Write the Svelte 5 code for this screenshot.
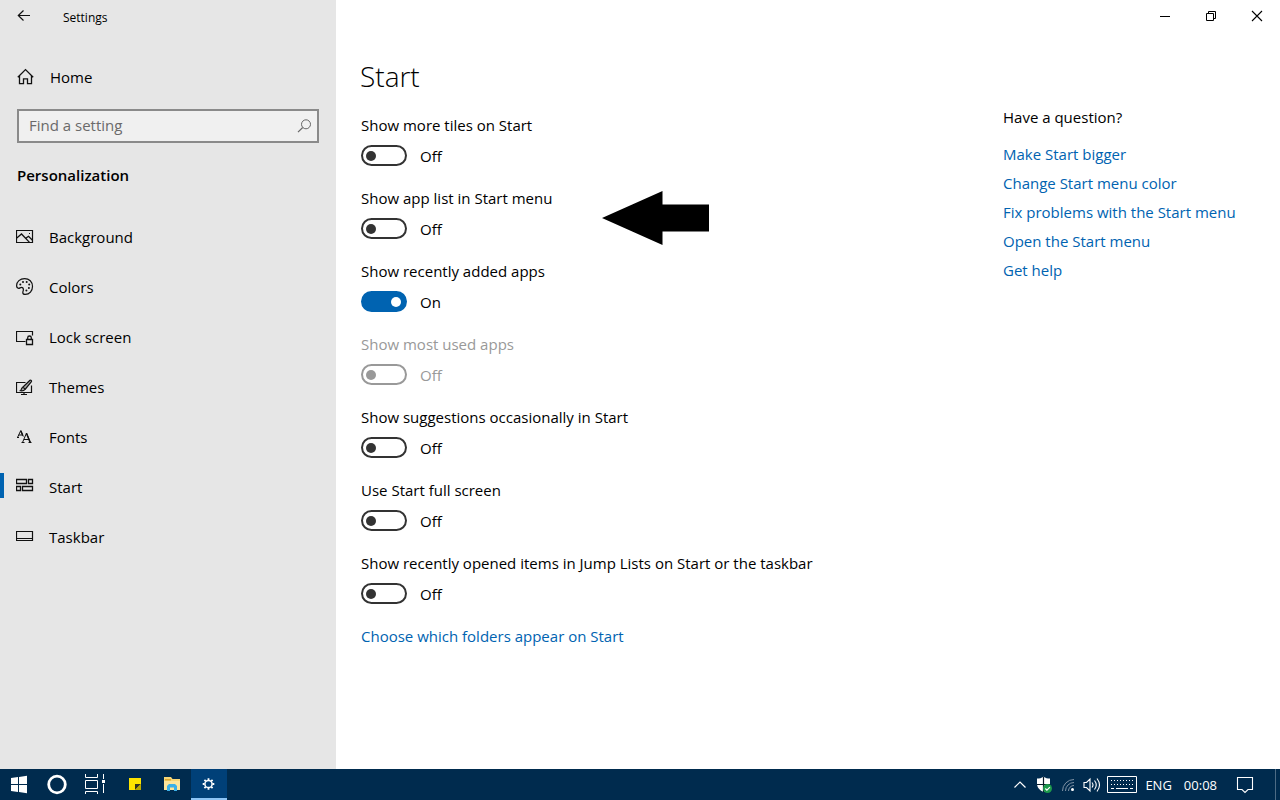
<script>
  const nav = [
    { id: 'background', label: 'Background' },
    { id: 'colors', label: 'Colors' },
    { id: 'lock', label: 'Lock screen' },
    { id: 'themes', label: 'Themes' },
    { id: 'fonts', label: 'Fonts' },
    { id: 'start', label: 'Start' },
    { id: 'taskbar', label: 'Taskbar' }
  ];

  let current = $state('start');

  let settings = $state([
    { id: 'tiles', label: 'Show more tiles on Start', on: false },
    { id: 'applist', label: 'Show app list in Start menu', on: false },
    { id: 'recent', label: 'Show recently added apps', on: true },
    { id: 'most-used', label: 'Show most used apps', on: false, disabled: true },
    { id: 'suggestions', label: 'Show suggestions occasionally in Start', on: false },
    { id: 'fullscreen', label: 'Use Start full screen', on: false },
    { id: 'jump', label: 'Show recently opened items in Jump Lists on Start or the taskbar', on: false }
  ]);

  const help = [
    'Make Start bigger',
    'Change Start menu color',
    'Fix problems with the Start menu',
    'Open the Start menu',
    'Get help'
  ];
</script>

<div class="screen">
  <div class="window">
    <aside class="sidebar">
      <header class="titlebar">
        <button class="back" aria-label="Back">
          <svg width="14" height="12" viewBox="0 0 14 12"><path d="M6.500.5 1.300 5.500l5.200 5M1.300 5.500H13" fill="none" stroke="#111" stroke-width="1.200" /></svg>
        </button>
        <span class="app-name">Settings</span>
      </header>

      <a class="home" href="#home">
        <svg width="18" height="18" viewBox="0 0 18 18"><path d="M1.800 9.300 9.500 1.600l7.700 7.700M3.500 7.600v8h4v-4.800h4v4.800h4v-8" fill="none" stroke="#111" stroke-width="1.300" /></svg>
        <span>Home</span>
      </a>

      <div class="search">
        <input type="text" placeholder="Find a setting" aria-label="Find a setting" />
        <svg width="14" height="14" viewBox="0 0 14 14"><circle cx="9" cy="5.300" r="4.500" fill="none" stroke="#666" /><path d="M5.700 8.500 1 13.200" stroke="#666" stroke-width="1.200" /></svg>
      </div>

      <h2>Personalization</h2>

      <nav>
        {#each nav as item (item.id)}
          <a href={'#' + item.id} class:active={current === item.id} onclick={() => (current = item.id)}>
            <svg width="18" height="18" viewBox="0 0 18 18" fill="none" stroke="#111">
              {#if item.id === 'background'}
                <path d="M.5 2.500h16v12H.5z" stroke-width="1.200" />
                <path d="M.8 10l4.700-4 8 8.400M9.800 10.300l2.700-2 4 4" stroke-width="1.300" />
                <rect x="13" y="5" width="1" height="1" fill="#111" stroke="none" />
              {:else if item.id === 'colors'}
                <path d="M8.600.6C4 .6.6 3.800.6 7.600c0 1.600.8 2.700 2 2.700 1.200 0 1.700-.9 2.900-.9 1.400 0 1.900 1 1.900 2.300 0 1-.6 1.600-.6 2.700 0 1.300 1 2 2.500 2 4.200 0 7.200-3.600 7.200-7.900C16.500 3.800 13.200.6 8.600.6z" stroke-width="1.200" />
                <g fill="#111" stroke="none"><circle cx="4.300" cy="6.500" r="1" /><circle cx="7" cy="3.900" r="1" /><circle cx="10.700" cy="3.900" r="1" /><circle cx="13.200" cy="6.500" r="1" /><circle cx="12.900" cy="9.900" r="1" /><circle cx="10.400" cy="12.500" r="1" /></g>
              {:else if item.id === 'lock'}
                <path d="M9.500 13.500H.5v-10h16v4" stroke-width="1.200" />
                <path d="M10.500 11.500h6v5h-6zM11.700 11.500V9.800a1.800 1.800 0 0 1 3.600 0v1.700" stroke-width="1.300" />
              {:else if item.id === 'themes'}
                <path d="M9.500 4.500h-9v10h15v-7M5 16.500h6M8 14.500v2" stroke-width="1.200" />
                <path d="M6.500 9.500 14 2.300c.8-.7 2 .4 1.400 1.300L9 11.500M6.500 9.500c1.300.1 2.300.9 2.500 2-1 1.300-2.500 1.500-4.500 1.200.9-.6.700-2.500 2-3.200z" fill="#aaa" stroke-width="1.200" />
              {:else if item.id === 'fonts'}
                <path d="M1.500 9.500 4.800 2.500 7.300 8.500M2.700 7h4M1 9.500h2M6.500 14.500l4-9.500 4 9.500M8 11.500h5M5.500 14.500h3M12.500 14.500h3" stroke-width="1" />
                <path d="m10.500 5.500 3.700 9M4.800 3l2 4.500" stroke-width="1.500" />
              {:else if item.id === 'start'}
                <path d="M.5 1.500h10v4H.5zM12.500 1.500h4v4h-4zM.5 8.500h4v4h-4zM6.500 8.500h10v4h-10z" stroke-width="1.300" />
              {:else}
                <path d="M.5 3.500h16v9H.5zM.5 10.500h16" stroke-width="1.200" />
              {/if}
            </svg>
            <span>{item.label}</span>
          </a>
        {/each}
      </nav>
    </aside>

    <main>
      <div class="controls">
        <button aria-label="Minimize"><svg width="12" height="12" viewBox="0 0 12 12"><path d="M1 6.500h10" stroke="#000" /></svg></button>
        <button aria-label="Restore"><svg width="12" height="12" viewBox="0 0 12 12"><path d="M1.500 3.500h7v7h-7zM3.500 3.500v-2h7v7h-2" fill="none" stroke="#000" /></svg></button>
        <button aria-label="Close"><svg width="12" height="12" viewBox="0 0 12 12"><path d="m1 1 10 10M11 1 1 11" stroke="#000" stroke-width="1.100" /></svg></button>
      </div>

      <div class="content">
        <section class="options">
          <h1>Start</h1>
          {#each settings as s (s.id)}
            <div class="option" class:disabled={s.disabled}>
              <label for={s.id}>{s.label}</label>
              <div class="toggle">
                <input id={s.id} type="checkbox" role="switch" bind:checked={s.on} disabled={s.disabled} />
                <span>{s.on ? 'On' : 'Off'}</span>
              </div>
              {#if s.id === 'applist'}
                <svg class="pointer" width="108" height="54" viewBox="0 0 108 54"><path d="M0 27 60.500 0v13.500H107v27H60.500V54z" /></svg>
              {/if}
            </div>
          {/each}
          <a class="link" href="#folders">Choose which folders appear on Start</a>
        </section>

        <section class="help">
          <h3>Have a question?</h3>
          {#each help as h (h)}
            <a class="link" href="#help">{h}</a>
          {/each}
        </section>
      </div>
    </main>
  </div>

  <footer class="taskbar">
    <div class="apps">
      <button aria-label="Start menu">
        <svg width="38" height="31" viewBox="0 0 38 31"><path d="M11 9l7-1v7h-7zM19 7.900 27 6.800V15h-8zM11 16h7v7l-7-1zM19 16h8v8.200l-8-1.100z" fill="#fff" /></svg>
      </button>
      <button aria-label="Cortana">
        <svg width="38" height="31" viewBox="0 0 38 31"><circle cx="19" cy="15.500" r="8.300" fill="none" stroke="#fff" stroke-width="2.800" /></svg>
      </button>
      <button aria-label="Task view">
        <svg width="38" height="31" viewBox="0 0 38 31"><path d="M9.500 5v3.500h12V5M9.500 11.500h12v8h-12zM9.500 25v-2.500h12V25M27.500 5v5M27.500 15v9" fill="none" stroke="#fff" /><path d="M26 11h3v3h-3z" fill="#fff" /></svg>
      </button>
      <button aria-label="Sticky Notes">
        <svg width="38" height="31" viewBox="0 0 38 31"><path d="M15 9h12v12H15z" fill="#fde300" /><path d="M21 15h6l-6 6z" fill="#333320" /><path d="M27 15v6h-6z" fill="#b8a800" /></svg>
      </button>
      <button aria-label="File Explorer">
        <svg width="38" height="31" viewBox="0 0 38 31"><path d="M12 8h7l1.500 2H28v11H12z" fill="#f8d775" /><path d="M13 10h6v1.500h-6z" fill="#e0a832" /><path d="M12 12h16v9H12z" fill="#fde59b" /><path d="M15 22v-5l2-2h6l2 2v5h-3v-3.500h-4V22z" fill="#3bb0e8" /></svg>
      </button>
      <button class="running" aria-label="Settings">
        <svg width="36" height="31" viewBox="0 0 36 31" fill="none" stroke="#fff"><circle cx="17.500" cy="15" r="3.600" stroke-width="1.500" /><path d="M17.500 9.200v1.800M17.500 19v1.800M11.700 15h1.800M21.500 15h1.800M13.400 10.900l1.300 1.300M20.300 17.800l1.300 1.300M13.400 19.100l1.300-1.300M20.300 12.200l1.300-1.300" stroke-width="1.800" /></svg>
      </button>
    </div>

    <div class="tray">
      <button aria-label="Show hidden icons"><svg width="14" height="10" viewBox="0 0 14 10"><path d="M1.500 7.500 7 2l5.500 5.500" fill="none" stroke="#fff" stroke-width="1.200" /></svg></button>
      <button aria-label="Security">
        <svg width="18" height="18" viewBox="0 0 18 18"><path d="M8.500.8c2 1.400 4 1.700 6.500 1.700v5c0 4-2.500 6.700-6.500 8.500C4.500 14.200 2 11.500 2 7.500v-5C4.500 2.500 6.500 2.200 8.500.8z" fill="#fff" /><path d="M8.500 1v15M2 8.500h13" stroke="#0a1a28" stroke-width="1.200" /><circle cx="12.500" cy="12.500" r="4.500" fill="#1d9a4c" /><path d="m10.300 12.500 1.600 1.600 3-3" fill="none" stroke="#fff" stroke-width="1.200" /></svg>
      </button>
      <button aria-label="Network">
        <svg width="14" height="14" viewBox="0 0 14 14" fill="none" stroke="#7f92a5"><path d="M1.500 13A11.500 11.500 0 0 1 13 1.500M4.500 13A8.500 8.500 0 0 1 13 4.500M7.500 13A5.500 5.500 0 0 1 13 7.500" /><circle cx="11.500" cy="11.500" r="1.500" fill="#fff" stroke="none" /></svg>
      </button>
      <button aria-label="Volume">
        <svg width="18" height="16" viewBox="0 0 18 16" fill="none" stroke="#fff"><path d="M1 5.500h2.500L7 2v12l-3.500-3.500H1zM9 5.500q2 2.500 0 5M11.500 3.500q3.500 4.500 0 9M14 1.500q5 6.500 0 13" stroke-width="1.100" /></svg>
      </button>
      <button class="keyboard" aria-label="Touch keyboard">
        <svg width="30" height="18" viewBox="0 0 30 18" fill="none" stroke="#fff"><path d="M.5.5h29v16H.5z" /><path d="M4 4.500h23M4 8.500h23" stroke-dasharray="1 2" stroke-width="1.200" /><path d="M4 12.500h3M9 12.500h12M23 12.500h3" /></svg>
      </button>
      <span class="lang">ENG</span>
      <time>00:08</time>
      <button aria-label="Notifications">
        <svg width="18" height="18" viewBox="0 0 18 18"><path d="M1.500 1.500h15v12H12L9 16.500 6 13.500H1.500z" fill="none" stroke="#fff" stroke-width="1.100" /></svg>
      </button>
      <button class="peek" aria-label="Show desktop"></button>
    </div>
  </footer>
</div>

<style>
  :global(body) {
    margin: 0;
    background: #fff;
  }
  .screen {
    display: flex;
    flex-direction: column;
    min-height: 100vh;
    font-family: 'Open Sans', 'Noto Sans', sans-serif;
    font-size: 15px;
    line-height: 20px;
    color: #000;
  }
  .screen * {
    box-sizing: border-box;
  }
  svg {
    display: block;
    flex: none;
  }
  button {
    display: flex;
    align-items: center;
    justify-content: center;
    padding: 0;
    border: 0;
    background: none;
    font: inherit;
    color: inherit;
  }
  a {
    color: inherit;
    text-decoration: none;
  }
  .window {
    flex: 1;
    display: grid;
    grid-template-columns: 336px 1fr;
  }
  .sidebar {
    background: #e6e6e6;
  }
  .titlebar {
    display: flex;
    align-items: flex-start;
    height: 34px;
    gap: 15px;
  }
  .back {
    width: 48px;
    height: 32px;
  }
  .app-name {
    font-size: 12px;
    line-height: 36px;
  }
  .home {
    display: flex;
    align-items: center;
    gap: 16px;
    height: 34px;
    margin: 26px 0 15px;
    padding-left: 16px;
  }
  .search {
    display: flex;
    align-items: center;
    height: 34px;
    margin: 0 17px;
    padding: 0 6px 0 10px;
    border: 2px solid #8a8a8a;
    background: #f0f0f0;
  }
  .search input {
    flex: 1;
    min-width: 0;
    height: 28px;
    padding: 0 0 2px;
    border: 0;
    outline: 0;
    background: none;
    font: inherit;
    color: #000;
  }
  .search input::placeholder {
    color: #6a6a6a;
    opacity: 1;
  }
  h2 {
    margin: 22px 0 27px;
    padding-left: 17px;
    font-size: 15px;
    font-weight: 600;
  }
  nav a {
    position: relative;
    display: flex;
    align-items: center;
    gap: 15px;
    height: 50px;
    padding-left: 16px;
  }
  nav a.active::before {
    content: '';
    position: absolute;
    left: 0;
    top: 11px;
    width: 4px;
    height: 25px;
    background: #0063b1;
  }
  .controls {
    display: flex;
    justify-content: flex-end;
    height: 32px;
  }
  .controls button {
    width: 46px;
  }
  .content {
    display: flex;
    justify-content: space-between;
    padding: 0 24px 24px;
  }
  h1 {
    margin: 24px 0 18px;
    font-size: 28px;
    line-height: 40px;
    font-weight: 300;
  }
  .option {
    position: relative;
    height: 73px;
  }
  .option label {
    display: block;
    padding: 1px;
  }
  .toggle {
    display: flex;
    align-items: center;
    gap: 13px;
    margin: 9px 0 0 1px;
  }
  .toggle input {
    appearance: none;
    display: flex;
    align-items: center;
    width: 46px;
    height: 21px;
    margin: 0;
    padding: 0 4px 0 3px;
    border: 2px solid #333;
    border-radius: 11px;
  }
  .toggle input::before {
    content: '';
    width: 10px;
    height: 10px;
    border-radius: 50%;
    background: #333;
  }
  .toggle input:checked {
    justify-content: flex-end;
    border-color: #0063b1;
    background: #0063b1;
  }
  .toggle input:checked::before {
    background: #fff;
  }
  .toggle input:disabled {
    border-color: #999;
  }
  .toggle input:disabled::before {
    background: #999;
  }
  .disabled {
    color: #999;
  }
  .pointer {
    position: absolute;
    left: 242px;
    top: 4px;
  }
  .link {
    display: block;
    color: #0063b1;
  }
  .options .link {
    padding: 1px;
  }
  .help {
    width: 253px;
    padding-top: 75px;
  }
  h3 {
    margin: 0 0 17px;
    font-size: 15px;
    font-weight: 400;
  }
  .help .link {
    margin-bottom: 9px;
  }
  .taskbar {
    display: flex;
    justify-content: space-between;
    height: 31px;
    background: #002b4e;
    color: #fff;
  }
  .apps,
  .tray {
    display: flex;
  }
  .running {
    margin-left: 1px;
    background: #004078;
    border-bottom: 2px solid #8cc4f5;
    align-items: flex-start;
    overflow: hidden;
  }
  .tray {
    align-items: center;
    font-size: 13px;
  }
  .tray button {
    width: 24px;
  }
  .tray .keyboard {
    width: 30px;
    margin-left: 3px;
  }
  .lang {
    margin: 0 12px 0 8px;
  }
  time {
    margin-right: 16px;
  }
  .tray .peek {
    align-self: stretch;
    width: 5px;
    margin-left: 18px;
    border-left: 1px solid #4d6b84;
  }
</style>
